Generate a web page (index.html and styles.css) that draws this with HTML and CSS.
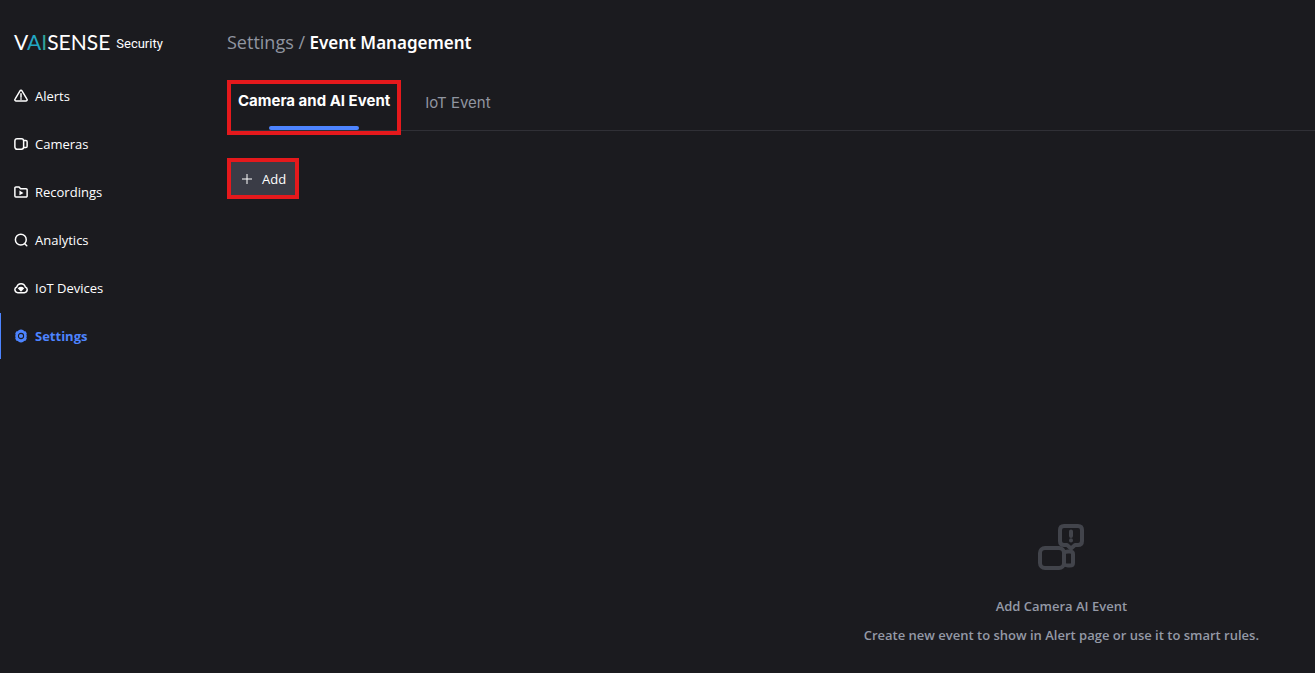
FILE: index.html
```html
<!DOCTYPE html>
<html lang="en">
<head>
  <meta charset="UTF-8">
  <meta name="viewport" content="width=device-width, initial-scale=1.0">
  <title>Event Management</title>
  <link rel="stylesheet" href="styles.css">
</head>
<body>
  <aside class="sidebar">
    <a href="#" class="brand">
      <span class="brand-name">V<span class="brand-a">A</span><span class="brand-i">I</span>SENSE</span>
      <span class="brand-product">Security</span>
    </a>
    <nav class="menu">
      <a href="#" class="menu-item">
        <svg class="icon" viewBox="0 0 16 16"><path d="M6.7 2.3 1.2 11.5a1.5 1.5 0 0 0 1.3 2.3h11a1.5 1.5 0 0 0 1.3-2.3L9.3 2.3a1.5 1.5 0 0 0-2.6 0z"/><path d="M8 5.5v4M8 11v.8"/></svg>
        Alerts
      </a>
      <a href="#" class="menu-item">
        <svg class="icon" viewBox="0 0 16 16"><rect x="1" y="2" width="10" height="12" rx="2.5"/><path d="M11 4h2.500A1.500 1.500 0 0 1 15 5.500v5a1.500 1.500 0 0 1-1.500 1.500H11"/></svg>
        Cameras
      </a>
      <a href="#" class="menu-item">
        <svg class="icon" viewBox="0 0 16 16"><path d="M1 12.5v-9a1.200 1.200 0 0 1 1.200-1.200h3.600l1.700 2h6.300A1.200 1.200 0 0 1 15 5.500v7a1.200 1.200 0 0 1-1.200 1.200H2.200A1.200 1.200 0 0 1 1 12.500z"/><path class="fill" d="M6.200 6.200v5.600L10.800 9z"/></svg>
        Recordings
      </a>
      <a href="#" class="menu-item">
        <svg class="icon" viewBox="0 0 16 16"><circle cx="7.800" cy="7.600" r="6.200"/><path d="m12.300 12.300 2.300 2.300"/></svg>
        Analytics
      </a>
      <a href="#" class="menu-item">
        <svg class="icon" viewBox="0 0 16 16"><path d="M4.300 13.300h7.600a3.300 3.300 0 0 0 1-6.400 5 5 0 0 0-9.700 0 3.300 3.300 0 0 0 1.100 6.400z"/><path class="fill" d="M4.300 8.200q3.700-3.200 7.400 0L8 12.400z"/></svg>
        IoT Devices
      </a>
      <a href="#" class="menu-item active">
        <svg class="icon" viewBox="0 0 16 16"><path class="gear" d="m6 2 2-.7L10 2l1 1 1.700.4 1 1.800-.4 1.400.5 1.400-.5 1.400.4 1.400-1 1.800-1.700.4-1 1-2 .7L6 14l-1-1-1.700-.4-1-1.800.4-1.400L2.200 8l.5-1.400-.4-1.400 1-1.800L5 3z"/><circle class="gear-hole" cx="8" cy="8" r="3"/></svg>
        Settings
      </a>
    </nav>
  </aside>

  <main class="content">
    <h1 class="breadcrumb"><a href="#">Settings /</a> Event Management</h1>

    <div class="tabs" role="tablist">
      <button type="button" class="tab selected" role="tab" aria-selected="true">Camera and AI Event</button>
      <button type="button" class="tab" role="tab" aria-selected="false">IoT Event</button>
    </div>

    <button type="button" class="add-button">
      <svg class="plus" viewBox="0 0 12 12"><path d="M6 1v10M1 6h10"/></svg>
      Add
    </button>

    <section class="empty-state">
      <svg class="empty-icon" viewBox="0 0 48 48">
        <rect x="3" y="25" width="24" height="20" rx="5"/>
        <path d="M27 30q1-1.500 4-1.500h2q3 0 3 2.500v9q0 2.500-3 2.500h-2q-3 0-4-1.500"/>
        <path d="M27 3h14q4 0 4 4v11q0 4-4 4h-3l-4 3.500-4-3.500h-3q-4 0-4-4V7q0-4 4-4z"/>
        <path d="M34 8.500v4.500M34 17.300v.2"/>
      </svg>
      <p>Add Camera AI Event</p>
      <p>Create new event to show in Alert page or use it to smart rules.</p>
    </section>
  </main>
</body>
</html>
```

FILE: styles.css
```css
* {
  box-sizing: border-box;
}

body {
  display: flex;
  min-height: 100vh;
  margin: 0;
  background-color: #1b1b1f;
  color: #ffffff;
  font-family: "Open Sans", "Noto Sans", sans-serif;
  font-size: 13px;
}

a {
  color: inherit;
  text-decoration: none;
}

.sidebar {
  flex: 0 0 227px;
  padding-top: 28px;
}

.brand {
  display: flex;
  align-items: center;
  gap: 6px;
  height: 28px;
  margin-bottom: 17px;
  padding-left: 14px;
  line-height: 28px;
}

.brand-name {
  font-family: Lato, sans-serif;
  font-size: 21px;
}

.brand-a {
  color: #22a7c4;
}

.brand-i {
  color: #2fa39b;
}

.brand-product {
  padding-top: 3px;
  font-family: Roboto, sans-serif;
  font-size: 13px;
}

.menu-item {
  display: flex;
  align-items: center;
  gap: 7px;
  height: 46px;
  margin: 2px 0;
  padding-left: 14px;
}

.menu-item.active {
  padding-left: 13px;
  border-left: 1px solid #4d84ff;
  color: #4d84ff;
  font-weight: bold;
}

.icon {
  width: 14px;
  height: 14px;
  fill: none;
  stroke: currentColor;
  stroke-width: 1.7;
  stroke-linecap: round;
  stroke-linejoin: round;
}

.icon .fill {
  fill: currentColor;
  stroke: none;
}

.icon .gear {
  fill: currentColor;
}

.icon .gear-hole {
  stroke: #1b1b1f;
  stroke-width: 1.2;
}

.content {
  display: flex;
  flex: 1;
  flex-direction: column;
  align-items: flex-start;
  min-width: 0;
  padding: 28px 0 23px;
}

.breadcrumb {
  margin: 0 0 23px;
  font-family: "Noto Sans", sans-serif;
  font-size: 17px;
  font-weight: 600;
  line-height: 28px;
}

.breadcrumb a {
  color: #9095a0;
  font-family: "Open Sans", sans-serif;
  font-size: 18px;
  font-weight: normal;
}

.tabs {
  display: flex;
  align-self: stretch;
  align-items: flex-start;
  height: 51px;
  margin-bottom: 27px;
  border-bottom: 1px solid #303036;
}

.tab {
  height: 44px;
  padding: 0 24px;
  border: none;
  background: none;
  color: #9095a0;
  font-family: Inter, sans-serif;
  font-size: 15px;
  cursor: pointer;
}

.tab.selected {
  position: relative;
  height: 55px;
  padding: 0 7px 14px;
  border: 4px solid #e5191c;
  color: #ffffff;
  font-weight: bold;
}

.tab.selected::after {
  content: "";
  position: absolute;
  bottom: 1px;
  left: 50%;
  width: 90px;
  height: 4px;
  margin-left: -45px;
  border-radius: 2px;
  background-color: #4d84ff;
}

.add-button {
  display: flex;
  align-items: center;
  gap: 9px;
  height: 41px;
  padding: 0 9px 0 10px;
  border: 4px solid #e5191c;
  background-color: #3a3c46;
  color: #ffffff;
  font-family: inherit;
  font-size: 13px;
  cursor: pointer;
}

.plus {
  width: 12px;
  height: 12px;
  stroke: #ffffff;
}

.empty-state {
  display: flex;
  flex-direction: column;
  align-items: center;
  align-self: flex-end;
  margin-top: auto;
  margin-right: 56px;
  color: #9499a6;
  font-weight: 600;
}

.empty-icon {
  width: 48px;
  height: 48px;
  margin-bottom: 21px;
  fill: none;
  stroke: #42444b;
  stroke-width: 4;
  stroke-linecap: round;
  stroke-linejoin: round;
}

.empty-state p {
  margin: 0;
  line-height: 29px;
}
```
